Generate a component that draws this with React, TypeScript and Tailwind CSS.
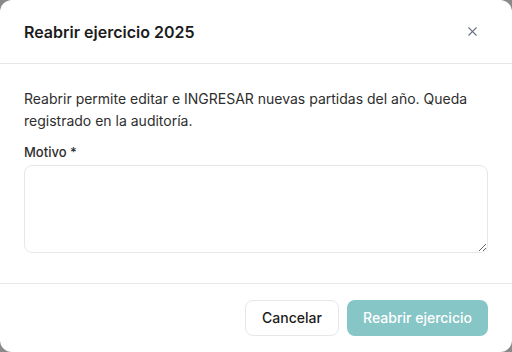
import React from 'react';
import { X } from 'lucide-react';

const App: React.FC = () => {
  return (
    <div className="w-[512px] h-[352px] bg-[#8a8a8a]" style={{ fontFamily: 'Inter, "Noto Sans", sans-serif' }}>
      <div className="flex h-full w-full flex-col rounded-xl bg-white">
        <div className="flex h-16 items-center justify-between border-b border-gray-200 pl-6 pr-7">
          <h2 className="text-base font-semibold text-[#1c1c1c]">Reabrir ejercicio 2025</h2>
          <button className="flex h-6 w-6 items-center justify-center text-gray-500">
            <X size={15} strokeWidth={1.75} />
          </button>
        </div>

        <div className="flex h-[220px] flex-col border-b border-gray-200 px-6 pt-6">
          <p className="text-sm leading-[22px] text-[#2e2e2e]">
            Reabrir permite editar e INGRESAR nuevas partidas del año. Queda registrado en la auditoría.
          </p>
          <label className="mt-[10px] mb-[3px] text-[13px] leading-5 font-medium text-[#2e2e2e]">Motivo *</label>
          <textarea className="h-[88px] w-full rounded-lg border border-gray-200 bg-white px-3 py-2 text-sm outline-none" />
        </div>

        <div className="flex justify-end gap-2 px-6 pt-4">
          <button className="h-9 w-[94px] rounded-lg border border-gray-200 bg-white text-sm font-medium text-[#1c1c1c]">
            Cancelar
          </button>
          <button className="h-9 w-[141px] rounded-lg bg-[#86c6c6] text-sm font-medium text-white">
            Reabrir ejercicio
          </button>
        </div>
      </div>
    </div>
  );
};

export default App;
